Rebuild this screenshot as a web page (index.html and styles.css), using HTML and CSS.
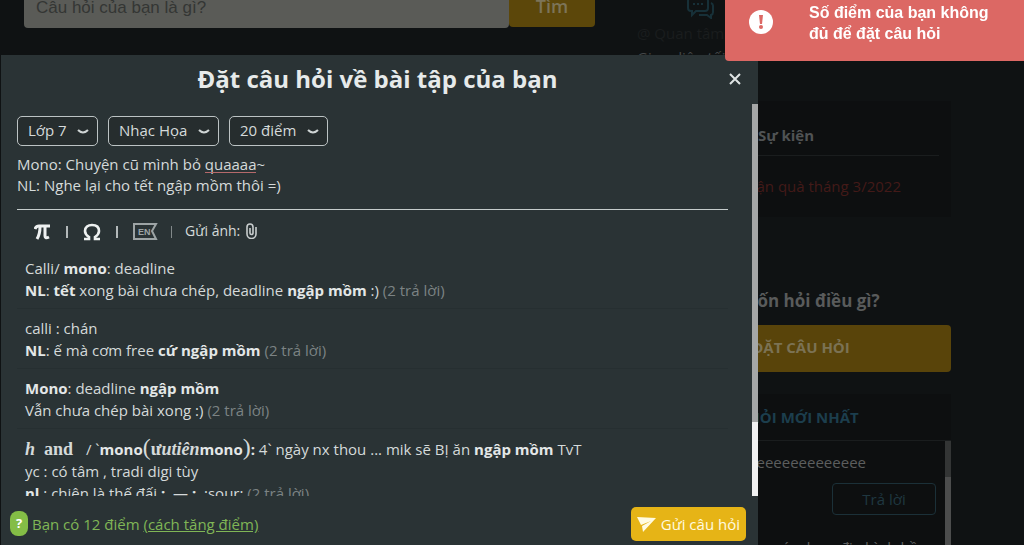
FILE: index.html
```html
<!DOCTYPE html>
<html lang="vi">
<head>
    <meta charset="UTF-8">
    <meta name="viewport" content="width=device-width, initial-scale=1.0">
    <title>Đặt câu hỏi</title>
    <link rel="stylesheet" href="styles.css">
</head>
<body>

    <div class="page">
        <main class="main">
            <form class="search">
                <input type="text" class="search-input" placeholder="Câu hỏi của bạn là gì?" aria-label="Câu hỏi của bạn là gì?">
                <button type="button" class="search-btn">Tìm</button>
            </form>
        </main>

        <aside class="sidebar">
            <div class="profile">
                <svg class="chat-icon" width="28" height="22" viewBox="0 0 28 22" fill="none" stroke="currentColor" stroke-width="2">
                    <path d="M4 1h14a3 3 0 0 1 3 3v7a3 3 0 0 1-3 3H9l-4 4v-4H4a3 3 0 0 1-3-3V4a3 3 0 0 1 3-3z"/>
                    <path d="M24 6a3 3 0 0 1 2 3v6a3 3 0 0 1-2 3v3l-4-3h-8"/>
                    <path d="M6 7h2M10 7h2M14 7h2"/>
                </svg>
                <p class="follow">@ Quan tâm</p>
                <p class="theme">Giao diện tối</p>
            </div>

            <section class="card events">
                <h3>Sự kiện</h3>
                <a href="#">Nhận quà tháng 3/2022</a>
            </section>

            <section class="ask">
                <h3>Bạn muốn hỏi điều gì?</h3>
                <button type="button" class="ask-btn">ĐẶT CÂU HỎI</button>
            </section>

            <section class="card latest">
                <h3>CÂU HỎI MỚI NHẤT</h3>
                <div class="latest-body">
                    <div class="latest-list">
                        <p>eeeeeeeeeeeeeeeeeeee</p>
                        <button type="button" class="reply-btn">Trả lời</button>
                        <p class="next">Trong các dạng địa hình bề</p>
                    </div>
                    <div class="rail"><div class="thumb"></div></div>
                </div>
            </section>
        </aside>
    </div>

    <div class="modal" role="dialog" aria-labelledby="modal-title">
        <header class="modal-header">
            <h2 id="modal-title">Đặt câu hỏi về bài tập của bạn</h2>
            <button type="button" class="close" aria-label="Đóng">
                <svg width="12" height="12" viewBox="0 0 12 12" stroke="currentColor" stroke-width="2"><path d="M1 1l10 10M11 1L1 11"/></svg>
            </button>
        </header>

        <div class="modal-body">
            <div class="modal-content">
                <div class="filters">
                    <div class="picker">
                        <select aria-label="Lớp"><option>Lớp 7</option></select>
                        <svg width="12" height="6" viewBox="0 0 12 6"><path d="M1 1q5 5 10 0"/></svg>
                    </div>
                    <div class="picker">
                        <select aria-label="Môn học"><option>Nhạc Họa</option></select>
                        <svg width="12" height="6" viewBox="0 0 12 6"><path d="M1 1q5 5 10 0"/></svg>
                    </div>
                    <div class="picker">
                        <select aria-label="Điểm"><option>20 điểm</option></select>
                        <svg width="12" height="6" viewBox="0 0 12 6"><path d="M1 1q5 5 10 0"/></svg>
                    </div>
                </div>

                <div class="editor">
                    <textarea rows="2" aria-label="Câu hỏi" spellcheck="false">Mono: Chuyện cũ mình bỏ quaaaa~
NL: Nghe lại cho tết ngập mồm thôi =)</textarea>
                    <span class="spell-mark"></span>
                </div>

                <div class="toolbar">
                    <button type="button" aria-label="Công thức">
                        <svg width="17" height="16" viewBox="0 0 17 16" fill="none" stroke="#eef1f1" stroke-width="3">
                            <path d="M1 5q1-3 4-3h11"/>
                            <path d="M6 3q0 7-3 12M11 3v9q0 3 4 1"/>
                        </svg>
                    </button>
                    <span class="sep"></span>
                    <button type="button" aria-label="Ký tự đặc biệt">
                        <svg width="18" height="18" viewBox="0 0 18 18" fill="none" stroke="#eef1f1" stroke-width="2.6">
                            <path d="M1 16h5v-2C3 12 2 10 2 8c0-4 3-6 7-6s7 2 7 6c0 2-1 4-4 6v2h5"/>
                        </svg>
                    </button>
                    <span class="sep"></span>
                    <button type="button" aria-label="Tiếng Anh">
                        <svg width="25" height="17" viewBox="0 0 25 17" fill="none" stroke="#9da4a5" stroke-width="2">
                            <path d="M1 1h22l-4 7 4 8H1z"/>
                            <text x="5" y="12">EN</text>
                        </svg>
                    </button>
                    <span class="sep dim"></span>
                    <button type="button" class="attach">
                        Gửi ảnh:
                        <svg width="11" height="16" viewBox="0 0 11 16" fill="none" stroke="#c8cdce" stroke-width="1.6">
                            <path d="M10 4v7a4 4 0 0 1-9 0V4a3 3 0 0 1 6 0v6a1.500 1.500 0 0 1-3 0V5"/>
                        </svg>
                    </button>
                </div>

                <ul class="results">
                    <li>Calli/ <b>mono</b>: deadline<br><b>NL</b>: <b>tết</b> xong bài chưa chép, deadline <b>ngập mồm</b> :) <span class="count">(2 trả lời)</span></li>
                    <li>calli : chán<br><b>NL</b>: ế mà cơm free <b>cứ ngập mồm</b> <span class="count">(2 trả lời)</span></li>
                    <li><b>Mono</b>: deadline <b>ngập mồm</b><br>Vẫn chưa chép bài xong :) <span class="count">(2 trả lời)</span></li>
                    <li><span class="math"><i>h</i>&nbsp; and &nbsp;</span> / `<b>mono</b><span class="math"><span class="paren">(</span>ư<i>utiên</i></span><b>mono</b><span class="math"><span class="paren">)</span></span><b>:</b> 4` ngày nx thou ... mik sẽ BỊ ăn <b>ngập mồm</b> TvT<br>yc : có tâm , tradi digi tùy<br><b>nl</b> : chiên là thế đấi <b>:</b>&nbsp; — <b>:</b>&nbsp; :sour: <span class="count">(2 trả lời)</span></li>
                </ul>
            </div>
            <div class="rail"><div class="thumb"></div></div>
        </div>

        <footer class="modal-footer">
            <span class="help">?</span>
            <p>Bạn có 12 điểm <a href="#">(cách tăng điểm)</a></p>
            <button type="button" class="send">
                <svg width="19" height="16" viewBox="0 0 19 16" fill="#fffbe0"><path d="M0 1l19 1L6 16l-1-6 9-5-10 4z"/></svg>
                Gửi câu hỏi
            </button>
        </footer>
    </div>

    <div class="toast" role="alert">
        <svg width="24" height="24" viewBox="0 0 24 24">
            <circle cx="12" cy="12" r="12" fill="#fff"/>
            <path d="M10 5h4l-1 9h-2z" fill="#dc6864"/>
            <circle cx="12" cy="17" r="2" fill="#dc6864"/>
        </svg>
        <p>Số điểm của bạn không đủ để đặt câu hỏi</p>
    </div>

</body>
</html>
```
FILE: styles.css
```css
* {
    box-sizing: border-box;
}

body {
    margin: 0;
    height: 100vh;
    overflow: hidden;
    background: #0f1213;
    color: #d5dada;
    font-family: 'Open Sans', 'Noto Sans', sans-serif;
    font-size: 15px;
}

h2, h3, p, ul {
    margin: 0;
    padding: 0;
}

button, select, input, textarea {
    font: inherit;
    color: inherit;
}

button {
    padding: 0;
    border: none;
    background: none;
}

.page {
    display: grid;
    grid-template-columns: 1fr 330px;
    column-gap: 26px;
    padding: 0 73px 0 24px;
}

/* search bar, scrolled partly out of view */
.search {
    display: flex;
    margin-top: -12px;
}

.search-input {
    flex: 1;
    min-width: 0;
    height: 40px;
    padding: 0 12px;
    border: none;
    border-radius: 4px;
    background: #5a5b57;
    font-family: 'Liberation Sans', sans-serif;
    font-size: 17px;
}

.search-input::placeholder {
    color: #343634;
}

.search-btn {
    width: 86px;
    height: 39px;
    padding-bottom: 4px;
    border-radius: 4px;
    background: #5c470a;
    color: #7c7458;
    font-size: 18px;
    font-weight: 600;
}

/* sidebar */
.profile {
    height: 104px;
    padding-left: 16px;
    color: #454849;
}

.chat-icon {
    display: block;
    margin: -3px 0 0 50px;
    color: #173038;
}

.follow {
    line-height: 20px;
    margin-top: 4px;
    color: #1a1d1e;
}

.theme {
    line-height: 20px;
    margin-top: 4px;
}

.card {
    background: #0d0f10;
}

.sidebar h3 {
    font-size: 15px;
    text-align: center;
}

.events {
    height: 116px;
    padding: 14px 12px 0;
}

.events h3 {
    line-height: 40px;
    border-bottom: 1px solid #1a1d1e;
    color: #505354;
}

.events a {
    display: block;
    padding-right: 38px;
    line-height: 60px;
    color: #431a18;
    text-align: right;
    text-decoration: none;
}

.ask {
    padding: 72px 0 22px;
}

.sidebar .ask h3 {
    line-height: 24px;
    font-size: 17px;
    color: #595b5b;
}

.ask-btn {
    width: 100%;
    height: 47px;
    margin-top: 12px;
    padding: 0 0 4px 30px;
    border-radius: 4px;
    background: #59440a;
    color: #7b7254;
    font-weight: bold;
}

.latest h3 {
    padding: 11px 0;
    line-height: 24px;
    border-bottom: 1px solid #1a1d1e;
    color: #1c3e4d;
}

.latest-body {
    display: flex;
    height: 120px;
}

.latest-list {
    flex: 1;
    padding: 0 9px;
    color: #5c5e5e;
    text-align: right;
}

.latest-list p {
    padding-right: 70px;
    line-height: 42px;
}

.reply-btn {
    width: 104px;
    height: 32px;
    border: 1px solid #1b3038;
    border-radius: 4px;
    color: #1f3740;
}

.latest-list .next {
    padding: 20px 18px 0;
    line-height: 24px;
}

.rail {
    width: 6px;
    background: #f0f1f1;
}

.thumb {
    height: 81%;
    background: #a5a7a7;
}

.latest .rail {
    background: #4c4d4d;
}

.latest .thumb {
    height: 30%;
    background: #333535;
}

/* question dialog */
.modal {
    position: fixed;
    top: 55px;
    bottom: 0;
    left: 1px;
    width: 74%;
    max-width: 757px;
    display: flex;
    flex-direction: column;
    background: #2a3335;
}

.modal-header {
    display: flex;
    align-items: center;
    height: 49px;
    padding: 0 17px 2px;
    flex-shrink: 0;
}

.modal-header h2 {
    flex: 1;
    padding-left: 8px;
    font-size: 24px;
    color: #e6eaea;
    text-align: center;
}

.close {
    display: flex;
    color: #dfe4e4;
}

.modal-body {
    flex: 1;
    min-height: 0;
    display: flex;
    overflow: hidden;
}

.modal-content {
    flex: 1;
    padding: 12px 24px 0 16px;
}

.filters {
    display: flex;
    gap: 10px;
}

.picker {
    position: relative;
}

.picker select {
    appearance: none;
    height: 30px;
    padding: 0 30px 2px 10px;
    border: 1px solid #bcc3c4;
    border-radius: 5px;
    background: #262d2e;
}

.picker svg {
    position: absolute;
    top: 13px;
    right: 9px;
    fill: none;
    stroke: #cfd5d5;
    stroke-width: 2;
    pointer-events: none;
}

.editor {
    position: relative;
    margin-top: 8px;
}

.editor textarea {
    display: block;
    width: 100%;
    height: 56px;
    padding: 0;
    border: none;
    border-bottom: 1px solid #c5cccc;
    outline: none;
    resize: none;
    background: transparent;
    line-height: 21px;
}

.spell-mark {
    position: absolute;
    top: 18px;
    left: 188px;
    width: 51px;
    border-bottom: 1px solid #b5696b;
}

.toolbar {
    display: flex;
    align-items: center;
    height: 39px;
    padding: 4px 0 0 17px;
    gap: 15px;
}

.toolbar button {
    display: flex;
    align-items: center;
    gap: 6px;
}

.toolbar text {
    font: bold 9px 'Liberation Sans', sans-serif;
    fill: #9da4a5;
    stroke: none;
}

.toolbar .sep.dim {
    margin: 0 -2px;
}

.toolbar .attach {
    padding-bottom: 2px;
    font-size: 14px;
}

.sep {
    width: 2px;
    height: 12px;
    background: #b3b9ba;
}

.sep.dim {
    width: 1px;
    background: #82898a;
}

.results {
    list-style: none;
}

.results li {
    padding: 8px;
    border-bottom: 1px solid #262f31;
    line-height: 22px;
    height: 60px;
}

.results li:last-child {
    height: auto;
    border: none;
}

.results b {
    color: #e3e7e7;
}

.count {
    color: #7c8384;
}

.math {
    font-family: 'Liberation Serif', serif;
    font-size: 18px;
    font-weight: bold;
}

.paren {
    font-size: 24px;
    line-height: 20px;
    font-weight: normal;
}

.modal-footer {
    display: flex;
    align-items: center;
    height: 49px;
    padding: 6px 12px 0 9px;
    gap: 4px;
    flex-shrink: 0;
    color: #80b656;
}

.modal-footer p {
    flex: 1;
}

.modal-footer a {
    color: inherit;
}

.help {
    width: 18px;
    line-height: 25px;
    border-radius: 8px;
    background: #84bd46;
    color: #fff;
    font-size: 13px;
    font-weight: bold;
    text-align: center;
}

.send {
    display: flex;
    align-items: center;
    height: 34px;
    padding: 0 6px;
    gap: 5px;
    border-radius: 5px;
    background: #e6b416;
    color: #fffbe0;
}

/* error message */
.toast {
    position: fixed;
    top: 0;
    right: 0;
    display: flex;
    gap: 36px;
    width: 299px;
    height: 61px;
    padding: 2px 20px 0 24px;
    border-radius: 0 0 0 4px;
    background: #dc6864;
    color: #fff;
    font: bold 16px/21px 'Liberation Sans', sans-serif;
}

.toast svg {
    flex-shrink: 0;
    margin-top: 8px;
}
```
